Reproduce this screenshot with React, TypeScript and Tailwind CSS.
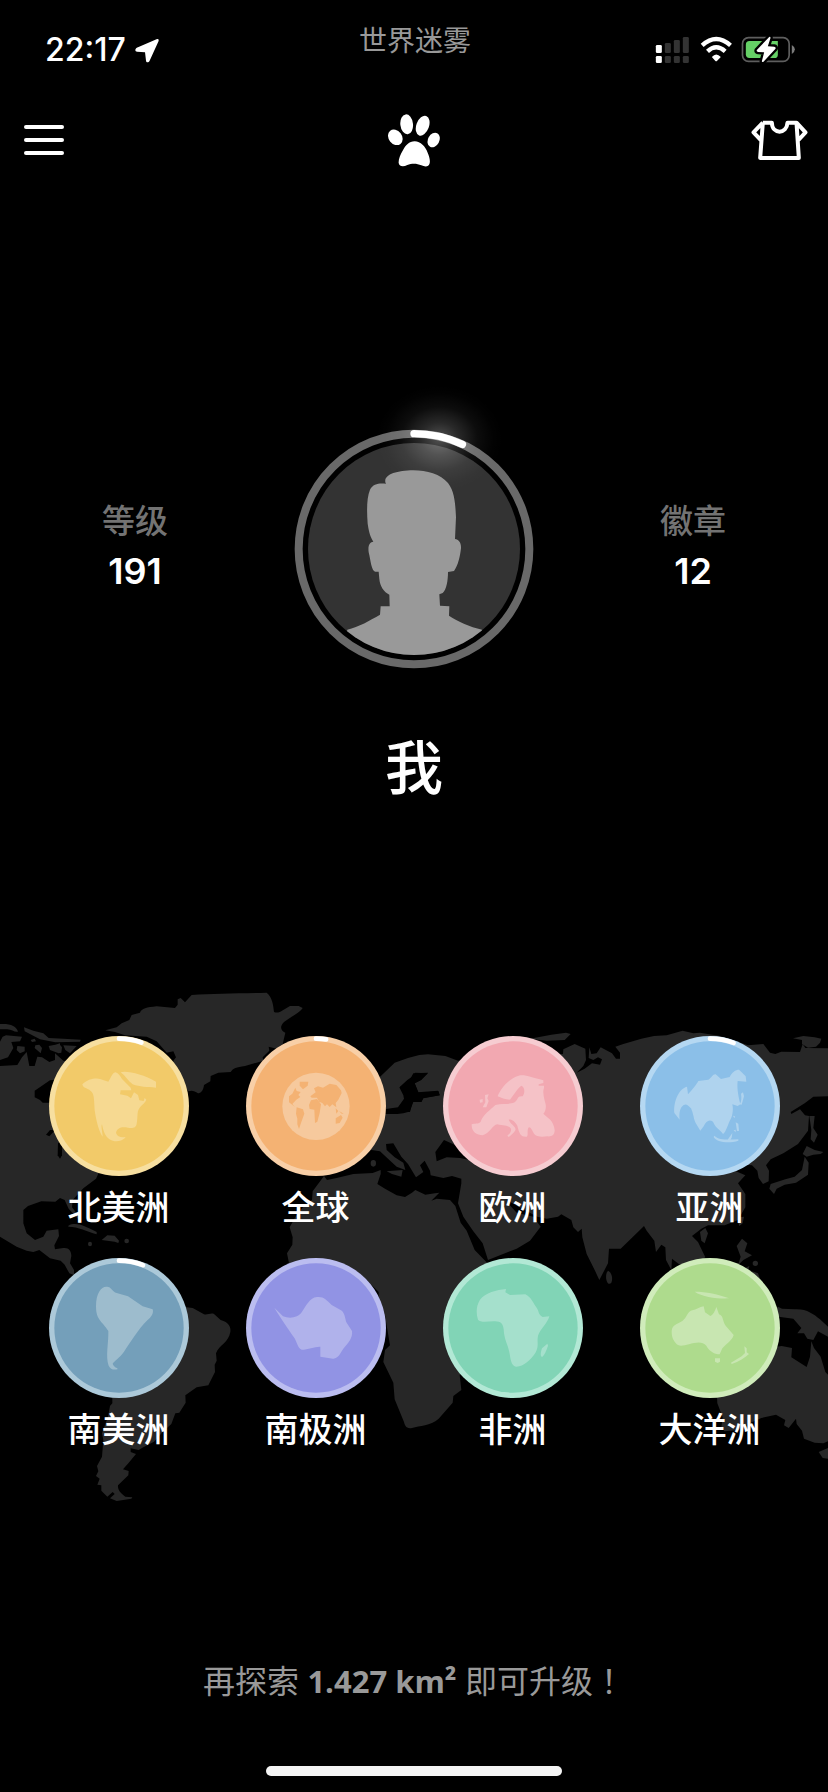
import React from "react";

type Continent = {
  name: string;
  fill: string;
  ring: string;
  shape: string;
  view: string;
  cx: number;
  cy: number;
  progress?: number;
  globe?: boolean;
  land: string[];
};

const continents: Continent[] = [
  {
    name: "北美洲",
    fill: "#f2ca69",
    ring: "#f7dfa0",
    shape: "#f6d991",
    view: "147 197 420 420",
    cx: 357,
    cy: 407,
    progress: 0.054,
    land: [
      "M247 342C262 325 290 322 300 326L325 334C332 325 336 308 346 306C354 308 360 316 366 326L392 352L394 360H362L360 372L382 376L393 384L402 366L414 374L418 390L431 392L434 383L439 388C434 400 420 408 418 414C410 425 414 440 410 460C408 474 396 474 384 472C366 468 350 472 348 488C352 500 364 502 377 500C372 508 360 513 344 513C322 508 312 494 306 462C302 468 308 488 308 499C298 488 288 450 284 420C282 380 282 370 272 362C262 352 250 356 247 342Z",
      "M362 306C380 300 430 312 468 334V352C440 350 420 350 398 342C384 332 376 316 362 306Z",
    ],
  },
  {
    name: "全球",
    fill: "#f4b273",
    ring: "#f8cfa7",
    shape: "#f6c99d",
    view: "737 197 420 420",
    cx: 947,
    cy: 407,
    progress: 0.024,
    globe: true,
    land: [
      "M898 334L924 334L922 346L908 357L898 346Z",
      "M885 352L889 362L901 365L894 374L900 380L888 388L876 401L884 410L866 396V378L876 370Z",
      "M889 411L908 417L912 430L902 458L896 476L891 462V445L887 430Z",
      "M930 378L946 366L941 354L953 348L968 352L988 340L1008 344L1022 360L1024 368L1014 388L1006 398L1008 411L996 402L988 410L980 402L974 408L966 398L956 394L950 382L934 382Z",
      "M932 390L950 386L962 402L958 428L951 454L944 458L942 418L928 416L926 404Z",
      "M1006 444L1022 434L1027 442L1018 458L1006 460Z",
      "M1006 414L1014 422L1008 430ZM1016 422L1030 430L1024 430Z",
    ],
  },
  {
    name: "欧洲",
    fill: "#f2a8b1",
    ring: "#f6ccd1",
    shape: "#f5c2c7",
    view: "103 197 420 420",
    cx: 313,
    cy: 407,
    land: [
      "M267 378C272 362 296 326 330 316C350 312 370 322 404 330V338L390 342V346H406V352C402 362 404 376 410 398C414 410 410 424 404 430C416 442 436 450 438 480C438 496 428 499 416 498C398 500 384 500 376 490C370 478 364 466 359 472C354 484 360 496 354 499C336 500 332 490 326 466C316 448 304 446 300 448C306 462 324 470 320 480C316 488 306 496 300 500L296 496C304 490 310 482 306 474C298 464 284 466 266 462C252 464 242 490 222 495C204 494 188 484 189 462C196 458 212 462 216 454C224 432 244 420 260 404C284 398 300 404 318 396C330 388 324 376 342 378C350 366 348 350 338 346C328 352 318 370 304 388C290 388 276 382 267 378Z",
      "M229 374L240 372L236 384L240 392L233 411L222 411L230 396ZM213 388L222 386V396L214 397Z",
    ],
  },
  {
    name: "亚洲",
    fill: "#8bbfe8",
    ring: "#b5d8f2",
    shape: "#afd3ee",
    view: "693 197 420 420",
    cx: 903,
    cy: 407,
    progress: 0.057,
    land: [
      "M796 428C793 400 806 356 834 349L837 372C850 358 864 340 868 332L898 328C908 322 912 310 920 312L936 326L962 320C968 306 980 298 990 298L998 306L1010 318L1012 334L986 332C984 350 986 370 994 402L986 407L970 402C974 420 970 440 962 452C956 466 950 486 942 491C934 478 920 474 912 454C900 446 892 452 884 468L874 481L860 458C854 448 854 432 846 414C836 402 830 400 824 404C812 412 810 430 812 448Z",
      "M996 370L1002 366L1005 378L998 403L992 402C998 392 998 382 996 370ZM972 436L978 438L976 444ZM980 456L988 460L990 482L984 482ZM974 480L980 478V486ZM916 496C930 510 956 508 988 507V511C960 520 922 516 914 500ZM956 508L970 488L968 502L964 508Z",
    ],
  },
  {
    name: "南美洲",
    fill: "#749fba",
    ring: "#acc9d9",
    shape: "#9dbccd",
    view: "147 85 420 420",
    cx: 357,
    cy: 295,
    progress: 0.058,
    land: [
      "M288 230C288 190 304 170 320 171C334 170 336 186 350 190L384 200L428 230L458 239C462 250 454 262 442 272C414 300 394 334 372 366C358 386 344 392 338 402C342 414 352 414 354 418C342 422 332 420 326 408C316 380 326 340 325 304C306 274 288 272 288 230Z",
    ],
  },
  {
    name: "南极洲",
    fill: "#9193e4",
    ring: "#bbbdf0",
    shape: "#b0b2eb",
    view: "737 85 420 420",
    cx: 947,
    cy: 295,
    land: [
      "M822 234L848 260C868 268 894 264 904 248C916 230 928 204 950 202C970 200 978 210 994 226L1022 242C1034 250 1034 266 1038 278L1055 304C1058 324 1044 340 1030 356C1020 370 1014 388 998 387L960 381V351C944 350 924 360 904 360C890 354 890 334 880 322C864 298 844 270 822 234Z",
    ],
  },
  {
    name: "非洲",
    fill: "#81d4b6",
    ring: "#b2e8d5",
    shape: "#a5e0cc",
    view: "103 85 420 420",
    cx: 313,
    cy: 295,
    land: [
      "M292 178L290 188L304 196L350 194C368 202 374 222 384 234C392 246 388 254 402 262L422 260C416 282 396 296 388 318C384 338 392 350 380 370C366 390 344 412 322 411C306 408 306 386 302 368C298 344 286 330 285 298C282 280 276 276 260 275C240 274 216 280 208 270C202 250 202 230 214 210C230 190 264 180 292 178Z",
      "M416 342L418 348C414 360 408 376 400 382C394 380 396 368 400 356Z",
    ],
  },
  {
    name: "大洋洲",
    fill: "#aedb8d",
    ring: "#d0ecbb",
    shape: "#c8e6b1",
    view: "693 85 420 420",
    cx: 903,
    cy: 295,
    land: [
      "M788 304C790 284 806 284 820 274C834 264 836 244 850 242C862 240 872 232 884 230L888 248L904 259C912 256 918 244 922 232L930 254C944 258 940 276 950 288L974 316C970 332 952 342 940 356L932 374H926C910 370 900 362 892 348C880 334 860 338 840 344C822 348 808 352 800 340C790 328 788 318 788 304Z",
      "M857 186C890 186 930 194 960 206C930 208 880 202 857 186ZM918 386H933V396L926 400L918 396ZM1006 350L1013 356V368L1020 373C1008 384 990 396 968 403L966 399L998 380L1008 370Z",
    ],
  },
];

const land = [
  // Greenland
  "M316 181L350 172L365 160L388 150L395 135L420 128C425 115 440 112 470 109L525 114L533 104V88L542 84L555 97L575 75C640 70 720 71 800 68C816 80 820 104 822 126C832 130 840 126 846 122L870 108H896L908 114C900 128 872 140 852 156C838 170 842 182 856 188L848 222L830 236L806 230L808 242L788 262L790 272L735 288C708 292 700 294 692 306L655 308L632 318L631 334L612 345C610 362 602 370 594 370C584 362 574 360 566 364L540 340L520 272L528 262L520 244L500 248L470 214L440 200L375 196L345 186Z",
  // North and Central America
  "M0 288L52 285L66 262L80 246L88 288L104 288L112 260L126 262L148 276L165 270V250L190 272L240 280L160 330L150 331L104 362V382L120 390L128 398L155 398L200 480H150L138 494L148 499L160 486L200 490L300 600L288 626L250 655L218 690L216 712L236 738L240 752L228 740L206 716L194 690L180 684L166 695L124 694L84 708L70 720V760L80 790L105 810L130 800L140 782L175 778L177 798L163 826L165 838L190 834C206 832 214 842 214 858L210 880L222 900V915L208 910L194 884L182 872L150 865L118 840L100 846L80 842L50 830L0 800Z",
  // Arctic islands
  "M0 162C30 160 50 168 54 185C44 188 36 178 22 178H0Z",
  "M72 172L100 182L130 190L146 204L190 206L242 209L240 215L166 217L120 208L74 184Z",
  "M8 200L18 196L66 200L60 214L34 216L40 234L24 262L0 270V215Z",
  "M92 210L104 206L108 214L96 216ZM52 228L74 230V244L60 250L50 240ZM104 234L122 250L126 234L118 224L106 226Z",
  "M146 228L178 222L186 232L184 248L176 250L150 240ZM190 226L230 228L210 250L196 240ZM166 224L180 220V236Z",
  // Caribbean
  "M205 767C230 755 252 768 290 786V793C260 784 236 770 205 770Z",
  "M305 810L322 796L344 797L357 812L355 819L344 815Z",
  "M264 822A6 7 0 1 0 276 822A6 7 0 1 0 264 822ZM373 813A7 7 0 1 0 387 813A7 7 0 1 0 373 813Z",
  // South America
  "M225 920L400 940L560 1012L578 1014L612 1033C622 1036 632 1028 642 1032L662 1050C686 1056 694 1072 691 1086C686 1118 658 1124 648 1150L650 1172L644 1184L645 1206L625 1246L590 1252L556 1276L557 1298L538 1328L526 1330L514 1362L490 1384L462 1415L430 1432L416 1440L392 1435V1446L408 1452L385 1480L369 1498L386 1503L385 1516L354 1546C352 1560 364 1572 376 1580L397 1582L394 1586L350 1593L330 1585L344 1572L338 1566L322 1580L304 1562V1546L292 1544L299 1526L288 1518L295 1504L291 1488L306 1460L310 1410L306 1390L324 1340L330 1308L337 1300V1260L220 1120Z",
  // Africa
  "M972 618L981 630L1010 624L1060 612L1118 609L1142 600V612L1132 642L1155 656L1190 676L1215 681L1236 668L1246 660L1276 674L1305 670L1318 668L1294 692L1310 686L1350 690L1366 708L1382 758L1400 782L1424 840L1459 876L1500 900L1520 1080L1379 1215L1384 1260L1360 1278L1358 1298L1316 1346C1290 1368 1260 1366 1236 1374C1218 1378 1214 1364 1212 1356L1184 1288L1180 1238L1150 1176L1155 1140L1170 1126L1154 1030L1136 990V966L1100 930L1000 940L867 880L861 850L877 824L878 802L869 772L888 738L910 710L936 690L938 664Z",
  // Europe, Arabia and Asia
  "M1145 316L1184 278L1224 264L1258 255L1284 253L1336 258L1374 272L1500 260L1689 252L1690 238L1724 222L1756 236L1758 270L1750 288L1730 308L1754 296L1776 280L1800 284L1806 268L1794 262L1780 270L1766 264L1768 232L1774 252L1790 250L1802 232L1836 250L1848 266H1860V248L1846 230L1870 222L1924 206L1962 198L2000 196L2048 182L2080 190L2100 188L2160 198L2244 226L2290 222L2310 248L2326 252L2344 245L2400 246L2408 222L2416 234L2484 235V379L2440 380L2414 400L2372 426L2374 432L2400 418L2415 436L2427 438L2424 482L2394 522L2350 550L2312 568L2298 586L2307 602L2306 634L2289 642L2276 624L2272 602L2256 586L2236 584L2208 604L2236 616L2214 640L2236 672V712L2214 750L2174 766H2124L2104 776L2076 798L2094 816L2116 862L2060 900L2016 866L2014 900L1998 870L1996 832L1984 824L1968 846L1963 812L1940 782L1932 768L1916 784L1862 836L1827 836L1824 880L1798 930L1784 900L1760 852L1747 802L1745 776L1734 786L1720 772L1714 750L1684 733L1674 740L1640 746L1612 740L1574 720L1520 690L1526 702L1550 728L1600 740L1622 770L1590 812L1550 836L1464 870L1448 820L1420 784L1390 740L1374 700L1384 640V626L1356 618L1330 624L1292 616L1290 602L1274 572L1260 586L1270 606L1248 622L1224 582L1204 560L1180 520L1158 522L1160 540L1184 562L1210 578L1216 600L1190 590L1164 566L1140 544L1100 538L1060 440L1158 432L1192 432L1210 430L1224 426H1230L1238 396L1264 396L1270 384L1318 376L1316 364L1256 368L1244 340L1262 330L1284 310L1246 308L1236 320L1222 330L1200 350L1214 366L1212 386L1194 412L1158 417L1100 360Z",
  // Mediterranean islands
  "M1112 580A8 10 0 1 0 1128 580A8 10 0 1 0 1112 580ZM1160 604L1208 600L1204 620L1176 612Z",
  // Novaya Zemlya and northern isles
  "M1590 206L1654 194L1698 188L1712 192L1694 210L1640 212Z",
  "M2379 205L2410 198L2444 202L2464 206L2460 218L2448 230L2424 233L2406 222V210Z",
  // Sakhalin and Japan
  "M2428 438L2444 438L2440 474L2453 494L2442 518L2432 508L2434 480Z",
  "M2408 552L2420 528L2444 540L2470 546L2462 552L2440 554L2420 560Z",
  "M2414 560L2426 578L2424 614L2388 638L2354 644L2330 656L2322 672L2308 656L2312 642L2356 628L2384 620L2406 600Z",
  // South-east Asia islands
  "M2220 742L2232 740L2228 760L2218 768L2214 756ZM2100 786L2116 774L2124 790L2114 820L2104 812Z",
  "M2210 828L2226 806L2242 820L2234 844L2256 856L2230 870L2214 886L2222 860ZM2236 894L2248 888L2244 904ZM2258 880A8 8 0 1 0 2274 880A8 8 0 1 0 2258 880ZM2256 904L2274 910L2280 926L2264 920Z",
  "M1824 902C1834 906 1840 924 1834 938C1824 950 1814 928 1820 908Z",
  // New Guinea
  "M2334 1010L2346 1016L2384 1018C2420 1016 2440 1032 2460 1048L2484 1070V1100L2454 1084L2440 1110L2422 1106L2412 1090H2392L2404 1074L2380 1046L2336 1040L2300 1050Z",
  // Australia and Tasmania
  "M2330 1130L2345 1128L2376 1134L2374 1162L2420 1191L2430 1160L2434 1114L2442 1134L2462 1160L2476 1206L2484 1214V1414L2470 1420L2444 1418L2412 1406L2406 1382L2390 1362L2388 1346L2366 1374L2352 1366L2356 1350L2328 1334L2284 1344L2244 1362L2214 1380L2174 1384L2164 1374L2168 1342L2152 1300L2150 1260Z",
  "M2456 1446L2484 1434V1466L2468 1464Z",
];

const waters = [
  // Baltic, Black and other inland seas
  "M1224 340L1240 310L1284 308L1264 330L1244 340L1254 367L1314 362L1320 376L1270 385L1264 396L1240 396L1228 426H1190L1196 412L1213 392L1210 376L1198 352Z",
  "M1306 546L1332 510L1372 528L1420 572L1380 564L1340 562L1310 574Z",
];

function WorldMap() {
  return (
    <svg
      aria-hidden="true"
      viewBox="0 0 2484 1650"
      className="pointer-events-none absolute inset-x-0 top-0 w-full"
    >
      <g fill="#272727">
        {land.map((d) => (
          <path key={d} d={d} />
        ))}
      </g>
      <g fill="#000">
        {waters.map((d) => (
          <path key={d} d={d} />
        ))}
        <path d="M174 520L186 512V556L180 566L173 556Z" />
      </g>
    </svg>
  );
}

function arcPath(cx: number, cy: number, r: number, portion: number) {
  const a = portion * 2 * Math.PI;
  return `M${cx} ${cy - r}A${r} ${r} 0 0 1 ${cx + r * Math.sin(a)} ${cy - r * Math.cos(a)}`;
}

function ContinentButton({ c }: { c: Continent }) {
  return (
    <button type="button" className="flex flex-col items-center">
      <svg viewBox={c.view} className="size-[140px]" aria-hidden="true">
        <circle cx={c.cx} cy={c.cy} r={210} fill={c.ring} />
        <circle cx={c.cx} cy={c.cy} r={194} fill={c.fill} />
        {c.globe && <circle cx={c.cx} cy={c.cy + 1} r={101} fill={c.shape} />}
        {c.land.map((d) => (
          <path key={d} d={d} fill={c.globe ? c.fill : c.shape} />
        ))}
        {c.progress && (
          <path
            d={arcPath(c.cx, c.cy, 202, c.progress)}
            stroke="#fff"
            strokeWidth="14"
            strokeLinecap="round"
            fill="none"
          />
        )}
      </svg>
      <span className="mt-2 text-[34px] leading-[46px] font-medium text-white">{c.name}</span>
    </button>
  );
}

function StatusBar() {
  return (
    <div className="grid h-[100px] grid-cols-3 items-center pr-8 pl-[34px]">
      <div className="flex items-center gap-2 pl-[11px]">
        <span className="font-['Inter'] text-[32px] leading-10 font-medium">22:17</span>
        <svg viewBox="312 52 78 76" className="h-[25px] w-[26px]" aria-hidden="true">
          <path
            d="M380 56L320 82C314 86 314 93 321 94L345 95L348 121C349 128 356 127 359 121L386 62C388 56 385 54 380 56Z"
            fill="#fff"
          />
        </svg>
      </div>
      <h1 className="self-start pt-5 text-center text-[28px] leading-10 text-[#999]">世界迷雾</h1>
      <svg
        viewBox="103 48 422 84"
        className="h-7 w-[141px] justify-self-end"
        role="img"
        aria-label="信号、无线网络和电池"
      >
        <g fill="#fff">
          <rect x="105" y="75" width="18" height="24" rx="4" />
          <rect x="105" y="108" width="18" height="21" rx="4" />
        </g>
        <g fill="#333">
          <rect x="132" y="69" width="18" height="30" rx="4" />
          <rect x="159" y="60" width="18" height="39" rx="4" />
          <rect x="186" y="51" width="18" height="48" rx="4" />
          <rect x="132" y="108" width="18" height="21" rx="4" />
          <rect x="159" y="108" width="18" height="21" rx="4" />
          <rect x="186" y="108" width="18" height="21" rx="4" />
        </g>
        <path d="M244 76Q286 38 329 76" fill="none" stroke="#fff" strokeWidth="13" />
        <path d="M260 94Q286 70 313 94" fill="none" stroke="#fff" strokeWidth="13" />
        <path d="M273 111Q286 96 300 111L289 122Q286 125 283 122Z" fill="#fff" />
        <rect x="365" y="53" width="140" height="71" rx="18" fill="none" stroke="#5e5e5e" strokeWidth="5" />
        <path d="M513 75Q522 80 522 88Q522 97 513 102Z" fill="#7a7a7a" />
        <path d="M386 63H471V104Q471 114 461 114H386Q375 114 375 103V74Q375 63 386 63Z" fill="#65d066" />
        <path
          d="M445 51L408 90Q406 95 412 96L430 97L423 124Q424 128 428 125L464 86Q466 81 460 80L441 79L449 54Q449 49 445 51Z"
          fill="#fff"
          stroke="#000"
          strokeWidth="14"
          strokeLinejoin="round"
          paintOrder="stroke"
        />
      </svg>
    </div>
  );
}

function NavBar() {
  return (
    <nav className="grid h-20 grid-cols-3 items-center px-5">
      <button type="button" aria-label="菜单" className="flex w-12 flex-col gap-[9px] px-1">
        <span className="h-1 rounded-full bg-white" />
        <span className="h-1 rounded-full bg-white" />
        <span className="h-1 rounded-full bg-white" />
      </button>
      <button type="button" aria-label="足迹" className="justify-self-center">
        <svg viewBox="84 70 156 159" className="h-[53px] w-[52px]" fill="#fff" aria-hidden="true">
          <ellipse cx="106" cy="140" rx="20" ry="25" transform="rotate(-38 106 140)" />
          <ellipse cx="140" cy="101" rx="19" ry="30" transform="rotate(-6 140 101)" />
          <ellipse cx="188" cy="105" rx="19" ry="31" transform="rotate(20 188 105)" />
          <ellipse cx="221" cy="148" rx="17" ry="23" transform="rotate(28 221 148)" />
          <path d="M164 152C182 152 196 168 203 186C208 198 211 208 209 218C206 230 194 229 184 224C170 217 154 218 142 223C130 229 118 228 116 217C115 206 121 192 128 180C137 164 147 152 164 152Z" />
        </svg>
      </button>
      <button type="button" aria-label="装扮" className="justify-self-end">
        <svg viewBox="395 298 170 123" className="h-[41px] w-[57px]" aria-hidden="true">
          <path
            d="M430 306H457C458 342 502 342 504 306H531L558 335L537 358M430 306L402 335L424 358M430 306L422 412H538L531 306"
            fill="none"
            stroke="#fff"
            strokeWidth="12"
            strokeLinejoin="round"
          />
        </svg>
      </button>
    </nav>
  );
}

function Avatar() {
  return (
    <svg
      viewBox="42 86 720 720"
      className="size-60 justify-self-center overflow-visible"
      role="img"
      aria-label="头像"
    >
      <defs>
        <radialGradient id="glow">
          <stop offset="0" stopColor="#fff" stopOpacity="0.32" />
          <stop offset="0.3" stopColor="#fff" stopOpacity="0.16" />
          <stop offset="0.6" stopColor="#fff" stopOpacity="0.05" />
          <stop offset="0.85" stopColor="#fff" stopOpacity="0.01" />
          <stop offset="1" stopColor="#fff" stopOpacity="0" />
        </radialGradient>
        <clipPath id="disc">
          <circle cx="402" cy="446" r="318" />
        </clipPath>
      </defs>
      <circle cx="402" cy="446" r="346" fill="none" stroke="#696969" strokeWidth="24" />
      <circle cx="402" cy="446" r="318" fill="#333" />
      <ellipse cx="478" cy="115" rx="190" ry="160" fill="url(#glow)" />
      <path
        clipPath="url(#disc)"
        fill="#999"
        d="M316 246C312 222 350 211 400 210C440 210 482 222 504 248C526 276 526 320 528 350L525 416C536 418 544 426 543 444C540 470 534 496 522 512L504 515C504 540 500 568 488 578L478 582L480 616L508 618L507 646C530 662 570 680 606 688L620 790H180L202 688C236 680 270 660 300 643L302 618H329L328 583C312 576 300 558 298 536L296 514H286C274 512 272 480 266 456C264 440 266 426 280 424C268 404 266 388 263 370C260 330 260 292 270 268C280 248 300 248 318 250Z"
      />
      <path
        d={arcPath(402, 446, 346, 0.069)}
        fill="none"
        stroke="#fff"
        strokeWidth="22"
        strokeLinecap="round"
      />
    </svg>
  );
}

function Stat({ label, value }: { label: string; value: string }) {
  return (
    <div className="flex flex-col items-center pb-1.5">
      <dt className="text-[33px] leading-[50px] font-medium text-[#737373]">{label}</dt>
      <dd className="font-['Inter'] text-[36px] leading-[50px] font-semibold">{value}</dd>
    </div>
  );
}

export default function App() {
  return (
    <div className="flex min-h-screen flex-col bg-black font-['Noto_Sans','Noto_Sans_CJK_SC',sans-serif] text-white">
      <header>
        <StatusBar />
        <NavBar />
      </header>

      <section className="flex flex-col items-center pt-[249px]">
        <dl className="grid w-full grid-cols-[1fr_288px_1fr] items-center">
          <Stat label="等级" value="191" />
          <Avatar />
          <Stat label="徽章" value="12" />
        </dl>
        <h2 className="mt-[58px] text-[58px] leading-[80px] font-medium">我</h2>
      </section>

      <main className="relative mt-[163px] pt-[66px] pb-[95px]">
        <WorldMap />
        <div className="relative grid grid-cols-4 gap-y-7 px-5">
          {continents.map((c) => (
            <ContinentButton key={c.name} c={c} />
          ))}
        </div>
      </main>

      <footer className="mt-auto flex flex-col items-center pb-4">
        <p className="font-['Open_Sans','Noto_Sans_CJK_TC','Noto_Sans_CJK_SC',sans-serif] text-[32px] leading-[44px] text-[#999]">
          <span className="font-['Open_Sans','Noto_Sans_CJK_SC',sans-serif]">再探索 </span>
          <strong className="text-[31px] font-bold">1.427 km²</strong>
          <span className="font-['Open_Sans','Noto_Sans_CJK_SC',sans-serif]"> 即可升级</span>
          <span lang="zh-Hant">！</span>
        </p>
        <div className="mt-[63px] h-[10px] w-[296px] rounded-full bg-[#f4f4f4]" />
      </footer>
    </div>
  );
}
